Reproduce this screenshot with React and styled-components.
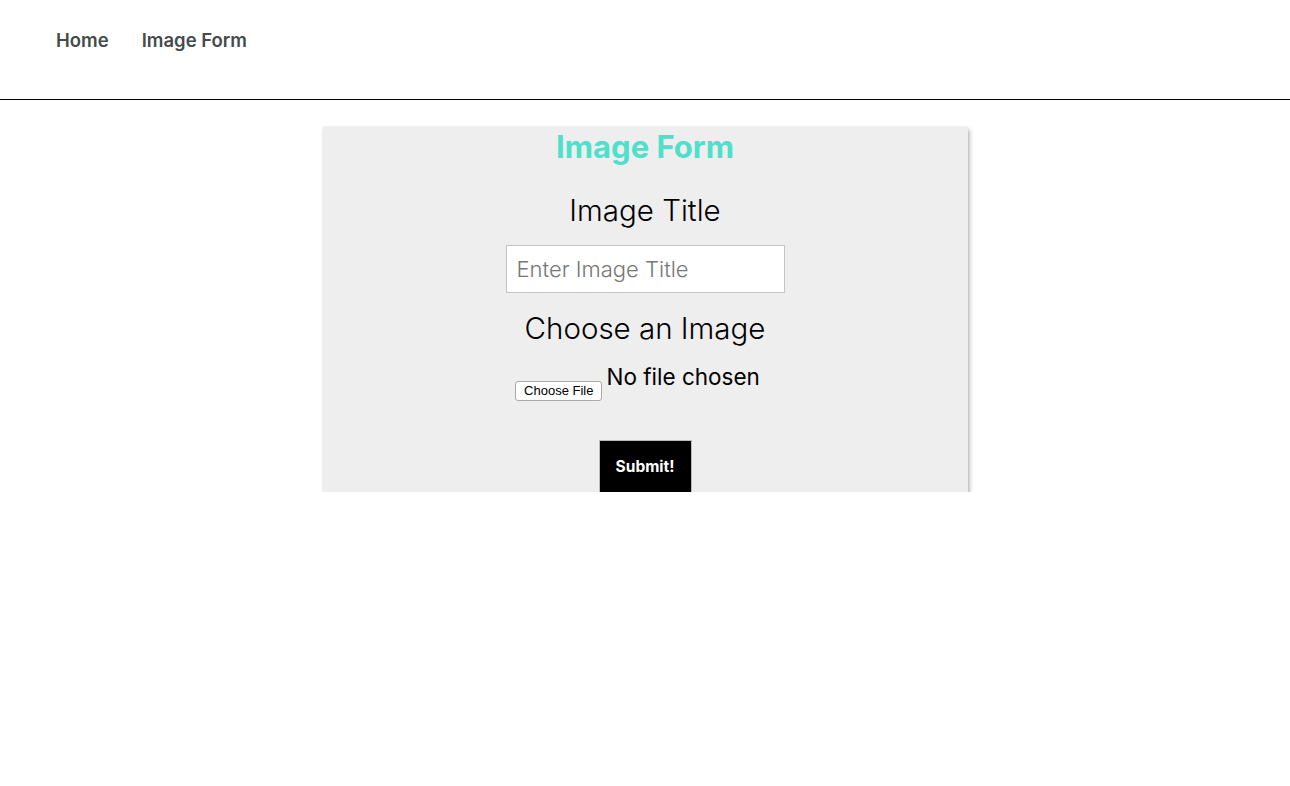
import React from 'react';
import styled, { createGlobalStyle } from 'styled-components';

const GlobalStyle = createGlobalStyle`
  body {
    margin: 0;
    background: #ffffff;
    font-family: Inter, "Liberation Sans", sans-serif;
  }
`;

const NavBar = styled.nav`
  height: 100px;
  border-bottom: 1px solid #000;
  display: flex;
  align-items: flex-start;
  gap: 33px;
  padding: 29px 0 0 56px;
  box-sizing: border-box;
`;

const NavLink = styled.a`
  font-size: 18.5px;
  font-weight: 600;
  color: #454b4b;
  text-decoration: none;
  cursor: pointer;
`;

const Main = styled.main`
  display: flex;
  justify-content: center;
  padding-top: 27px;
`;

const Card = styled.form`
  width: 50%;
  background: #eeeeee;
  box-shadow: 2px 3px 4px rgba(0, 0, 0, 0.25), 0 0 2px rgba(0, 0, 0, 0.12);
  display: flex;
  flex-direction: column;
  align-items: center;
`;

const Title = styled.h1`
  margin: 2px 0 0;
  font-size: 31px;
  font-weight: 700;
  color: #4fdfcb;
  line-height: 36px;
`;

const Label = styled.label`
  font-size: 29.5px;
  font-weight: 300;
  color: #000;
  line-height: 36px;
  margin-top: ${p => p.$top}px;
`;

const TextInput = styled.input`
  margin-top: 17px;
  width: 279px;
  height: 48px;
  box-sizing: border-box;
  border: 1px solid #c4c4c4;
  background: #fff;
  padding: 0 10px;
  font-family: inherit;
  font-size: 22px;
  font-weight: 300;
  outline: none;

  &::placeholder {
    color: #777;
  }
`;

const FileRow = styled.div`
  margin-top: 18px;
  display: flex;
  align-items: flex-end;
  gap: 4px;
  margin-left: -15px;
`;

const FileButton = styled.span`
  font-family: "Liberation Sans", Arial, sans-serif;
  font-size: 13px;
  color: #000;
  background: #fff;
  border: 1px solid #aaa;
  border-radius: 3px;
  padding: 2px 8px;
  line-height: 14px;
`;

const FileText = styled.span`
  font-size: 22.5px;
  font-weight: 400;
  color: #000;
  line-height: 26px;
  padding-bottom: 11px;
`;

const SubmitButton = styled.button`
  margin-top: 39px;
  width: 93px;
  height: 52px;
  background: #000;
  color: #fff;
  border: 1px solid #bbb;
  border-bottom: none;
  font-family: inherit;
  font-size: 15.5px;
  font-weight: 700;
  cursor: pointer;
`;

export default function App() {
  return (
    <>
      <GlobalStyle />
      <NavBar>
        <NavLink>Home</NavLink>
        <NavLink>Image Form</NavLink>
      </NavBar>
      <Main>
        <Card onSubmit={e => e.preventDefault()}>
          <Title>Image Form</Title>
          <Label $top={27}>Image Title</Label>
          <TextInput placeholder="Enter Image Title" />
          <Label $top={17}>Choose an Image</Label>
          <FileRow>
            <FileButton>Choose File</FileButton>
            <FileText>No file chosen</FileText>
          </FileRow>
          <SubmitButton type="submit">Submit!</SubmitButton>
        </Card>
      </Main>
    </>
  );
}
